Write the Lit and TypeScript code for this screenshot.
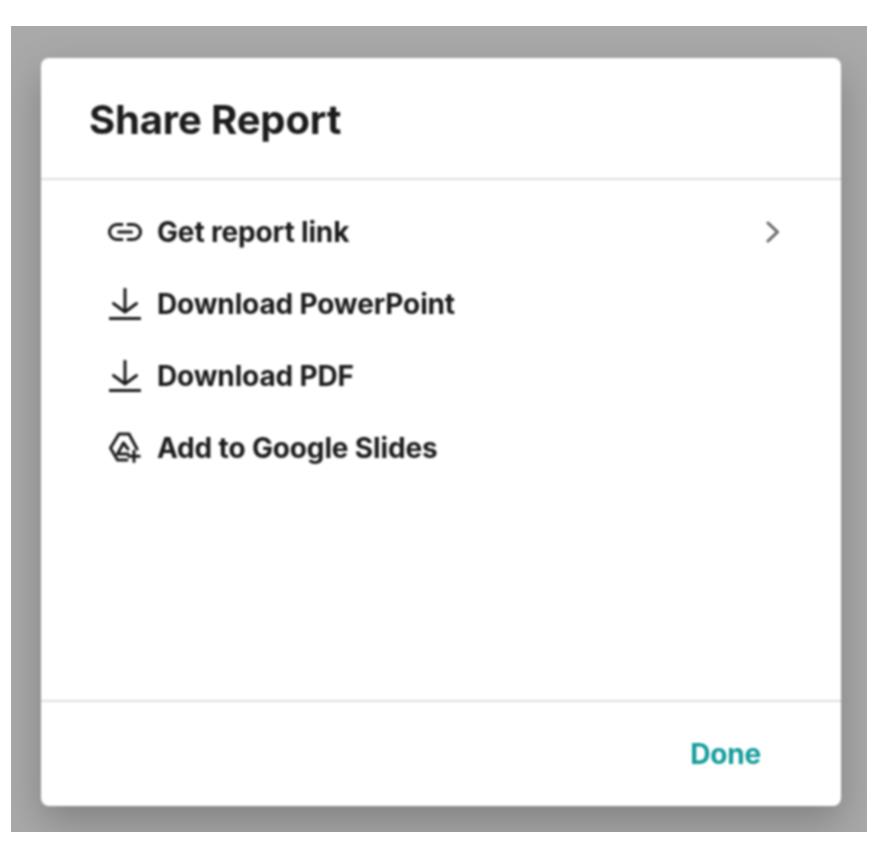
import { LitElement, html, css, svg } from "lit";
import { customElement } from "lit/decorators.js";

const linkIcon = svg`<path d="M14 1.500H9a7.500 7.500 0 0 0 0 15h5M20 1.500h5a7.500 7.500 0 0 1 0 15h-5M10.500 9h13"/>`;
const downloadIcon = svg`<path d="M16 1v23M4.500 15.500 16 24l11.500-8.500"/><path d="M1 30.500h30"/>`;
const slidesIcon = svg`<path d="M28 17 20 2h-10L1.500 16 8.500 28H18M14.500 11 8.500 22H19M14.500 11 19 17"/><path d="M25 19v10.500M19.800 24.300h10.500"/>`;

const rows = [
  { label: "Get report link", icon: linkIcon, vb: "0 0 34 18", w: 34, h: 18, chevron: true },
  { label: "Download PowerPoint", icon: downloadIcon, vb: "0 0 32 32", w: 32, h: 32, chevron: false },
  { label: "Download PDF", icon: downloadIcon, vb: "0 0 32 32", w: 32, h: 32, chevron: false },
  { label: "Add to Google Slides", icon: slidesIcon, vb: "0 0 32 32", w: 32, h: 32, chevron: false },
];

@customElement("app-root")
export class AppRoot extends LitElement {
  static styles = css`
    :host {
      display: block;
      height: 862px;
      background: #fff;
      padding: 26px 11px 30px;
      box-sizing: border-box;
      font-family: Inter, "Liberation Sans", sans-serif;
      overflow: hidden;
    }
    .overlay {
      height: 806px;
      box-sizing: border-box;
      padding: 32px 26px 26px 30px;
      background: #a9a9a9;
      overflow: hidden;
    }
    .dialog {
      height: 748px;
      display: flex;
      flex-direction: column;
      background: #fff;
      border-radius: 8px;
      box-shadow: 0 16px 40px rgba(0, 0, 0, 0.24);
      filter: blur(0.8px);
    }
    .head {
      height: 122px;
      flex: none;
      box-sizing: border-box;
      display: flex;
      align-items: center;
      padding: 3px 0 0 48px;
      border-bottom: 2px solid #e0e0e0;
    }
    h1 {
      margin: 0;
      font-size: 40px;
      line-height: 48px;
      font-weight: 700;
      letter-spacing: -0.15px;
      color: #1c1c1c;
    }
    .list {
      flex: 1;
      padding: 16px 60px 0 66px;
    }
    .row {
      height: 72px;
      display: flex;
      align-items: center;
      gap: 14px;
      font-size: 28px;
      font-weight: 700;
      letter-spacing: -0.15px;
      color: #1c1c1c;
    }
    .ico {
      width: 36px;
      flex: none;
      display: flex;
      justify-content: center;
    }
    svg {
      fill: none;
      stroke: #1c1c1c;
      stroke-width: 3;
      stroke-linecap: round;
      stroke-linejoin: round;
      display: block;
    }
    .label { flex: 1; }
    .chev { stroke: #666; }
    .foot {
      height: 106px;
      flex: none;
      box-sizing: border-box;
      border-top: 2px solid #e0e0e0;
      display: flex;
      align-items: center;
      justify-content: flex-end;
      padding-right: 80px;
      font-size: 28px;
      font-weight: 700;
      letter-spacing: -0.2px;
      color: #129c9a;
    }
  `;

  render() {
    return html`<div class="overlay">
      <div class="dialog">
        <div class="head"><h1>Share Report</h1></div>
        <div class="list">
          ${rows.map(
            (r) => html`<div class="row">
              <span class="ico"><svg width=${r.w} height=${r.h} viewBox=${r.vb}>${r.icon}</svg></span>
              <span class="label">${r.label}</span>
              ${r.chevron
                ? html`<svg class="chev" width="16" height="22" viewBox="0 0 16 22"><path d="M3 2l9.500 9L3 20"/></svg>`
                : ""}
            </div>`
          )}
        </div>
        <div class="foot">Done</div>
      </div>
    </div>`;
  }
}
